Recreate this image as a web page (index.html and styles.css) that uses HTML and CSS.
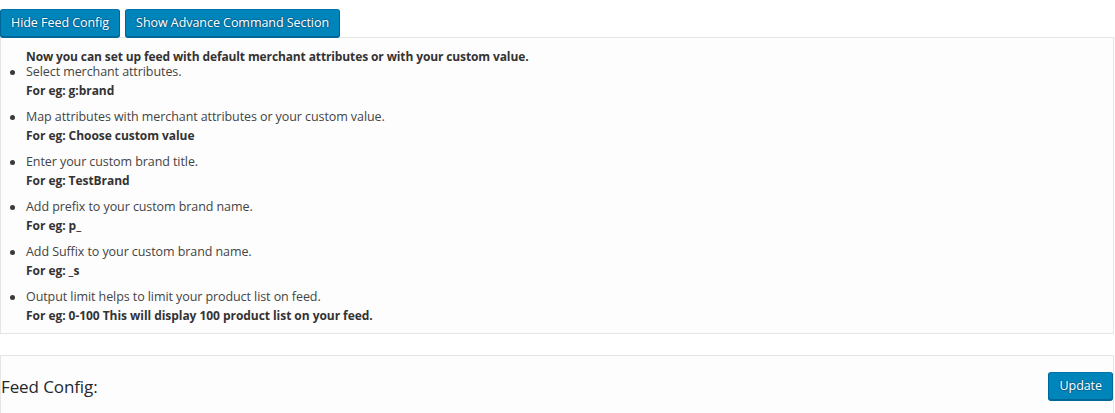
FILE: index.html
```html
<!DOCTYPE html>
<html>
<head>
<meta charset="utf-8">
<link rel="stylesheet" href="styles.css">
</head>
<body>
<div class="wrap">
  <div class="actions">
    <button class="btn">Hide Feed Config</button>
    <button class="btn">Show Advance Command Section</button>
  </div>
  <div class="box help">
    <div class="intro">Now you can set up feed with default merchant attributes or with your custom value.</div>
    <ul class="tips">
      <li>Select merchant attributes.<br><b>For eg: g:brand</b></li>
      <li>Map attributes with merchant attributes or your custom value.<br><b>For eg: Choose custom value</b></li>
      <li>Enter your custom brand title.<br><b>For eg: TestBrand</b></li>
      <li>Add prefix to your custom brand name.<br><b>For eg: p_</b></li>
      <li>Add Suffix to your custom brand name.<br><b>For eg: _s</b></li>
      <li>Output limit helps to limit your product list on feed.<br><b>For eg: 0-100 This will display 100 product list on your feed.</b></li>
    </ul>
  </div>
  <div class="box config">
    <div class="config-head">
      <h3 class="title">Feed Config:</h3>
      <button class="btn">Update</button>
    </div>
  </div>
</div>
</body>
</html>
```

FILE: styles.css
```css
html, body {
  margin: 0;
  padding: 0;
  background: #ffffff;
}
body {
  font-family: "Open Sans", "Noto Sans", sans-serif;
  font-size: 12.5px;
  letter-spacing: -0.08px;
  color: #444444;
}
.wrap {
  margin-right: 1px;
  padding-top: 9px;
}
.actions {
  display: flex;
  gap: 5px;
  height: 28px;
}
.btn {
  font-family: "Open Sans", "Noto Sans", sans-serif;
  font-size: 12.5px;
  letter-spacing: -0.05px;
  height: 28px;
  line-height: 26px;
  padding: 0 10px 1px;
  margin: 0;
  color: #ffffff;
  background: #0085ba;
  border: 1px solid #006799;
  border-top-color: #0073aa;
  border-radius: 3px;
  box-shadow: 0 1px 0 #006799;
  text-shadow: 0 -1px 1px #006799, 1px 0 1px #006799, 0 1px 1px #006799, -1px 0 1px #006799;
  white-space: nowrap;
  cursor: pointer;
}
.box {
  border: 1px solid #e5e5e5;
  background: #fdfdfd;
}
.help {
  padding: 12px 0 0 0;
}
.intro {
  padding-left: 25px;
  font-weight: 700;
  font-size: 12px;
  letter-spacing: -0.12px;
  color: #333333;
  line-height: 13px;
}
.tips {
  margin: 0;
  padding-left: 25px;
  list-style: none;
}
.tips li {
  position: relative;
  line-height: 18.5px;
  margin-bottom: 8px;
}
.tips li::before {
  content: "";
  position: absolute;
  left: -16px;
  top: 7px;
  width: 5px;
  height: 5px;
  border-radius: 50%;
  background: #3a3a3a;
}
.tips b {
  font-size: 12px;
  letter-spacing: -0.05px;
  color: #333333;
}
.config {
  margin-top: 21px;
  height: 80px;
  border-bottom: none;
}
.config-head {
  display: flex;
  justify-content: space-between;
  align-items: center;
  padding: 16px 0 0 0;
}
.title {
  margin: 0;
  font-size: 17px;
  letter-spacing: -0.1px;
  font-weight: 400;
  color: #23282d;
}
```
